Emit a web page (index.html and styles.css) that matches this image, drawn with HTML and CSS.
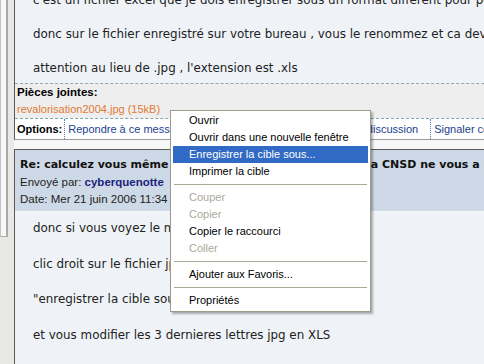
FILE: index.html
```html
<!DOCTYPE html>
<html>

<head>
    <title>Forum - revalorisation</title>
    <meta charset="utf-8">
    <link rel="stylesheet" href="styles.css">
</head>

<body>
    <div class="page">
        <div class="gutter">
            <div class="strip"></div>
        </div>

        <div class="thread">
            <!-- previous message, scrolled partly out of view -->
            <div class="post post-first">
                <div class="post-body">
                    <p>c'est un fichier excel que je dois enregistrer sous un format different pour pouvoir l'ouvrir sur mon ordinateur</p>
                    <p>donc sur le fichier enregistré sur votre bureau , vous le renommez et ca devrait marcher sans probleme</p>
                    <p>attention au lieu de .jpg , l'extension est .xls</p>
                </div>
                <div class="attach">
                    <div class="attach-title">Pièces jointes:</div>
                    <a class="attach-file" href="#">revalorisation2004.jpg (15kB)</a>
                </div>
                <div class="options">
                    <span class="options-label">Options:</span>
                    <a href="#">Repondre à ce message</a>
                    <a href="#">Citer ce message</a>
                    <a href="#">Voir toute la discussion</a>
                    <a href="#">Signaler ce message</a>
                </div>
            </div>

            <div class="post">
                <div class="post-head">
                    <div class="post-title">Re: calculez vous même votre revalorisation de 2004 si la CNSD ne vous a pas répondu</div>
                    <div class="post-meta">Envoyé par: <b>cyberquenotte</b></div>
                    <div class="post-meta">Date: Mer 21 juin 2006 11:34</div>
                </div>
                <div class="post-body">
                    <p>donc si vous voyez le message d'erreur</p>
                    <p>clic droit sur le fichier jpg</p>
                    <p>"enregistrer la cible sous"</p>
                    <p>et vous modifier les 3 dernieres lettres jpg en XLS</p>
                </div>
            </div>
        </div>
    </div>

    <!-- right-click menu over the attachment link -->
    <div class="context-menu">
        <div class="menu-item">Ouvrir</div>
        <div class="menu-item">Ouvrir dans une nouvelle fenêtre</div>
        <div class="menu-item active">Enregistrer la cible sous...</div>
        <div class="menu-item">Imprimer la cible</div>
        <div class="menu-sep"></div>
        <div class="menu-item disabled">Couper</div>
        <div class="menu-item disabled">Copier</div>
        <div class="menu-item">Copier le raccourci</div>
        <div class="menu-item disabled">Coller</div>
        <div class="menu-sep"></div>
        <div class="menu-item">Ajouter aux Favoris...</div>
        <div class="menu-sep"></div>
        <div class="menu-item">Propriétés</div>
    </div>
</body>

</html>
```

FILE: styles.css
```css
body {
    margin: 0;
    background-color: #f7f7f7;
    font-family: "Liberation Sans", Arial, sans-serif;
    overflow: hidden;
}

.page {
    display: flex;
    width: 760px;
    min-height: 364px;
}

.gutter {
    width: 14px;
    flex-shrink: 0;
    background-color: #e9e8e4;
}

.strip {
    width: 5px;
    height: 236px;
    background-color: #f8f8f8;
    border-left: 1px solid #c4c4c4;
    border-right: 2px solid #a9a9a9;
    border-bottom: 1px solid #a9a9a9;
}

.thread {
    flex: 1;
}

.post {
    background-color: #eff3f8;
    border: 1px solid #5a5a5a;
    border-right: none;
    margin-bottom: 9px;
}

.post-first {
    margin-top: -8px;
    border-top: none;
    border-bottom-color: #9a9a9a;
}

.post-body {
    padding: 0 18px 6px;
    font-family: "DejaVu Sans", Verdana, sans-serif;
    font-size: 11.9px;
    color: #222;
    white-space: nowrap;
}

.post-body p {
    margin: 0 0 17px;
    line-height: 17px;
}

.post-body p:last-child {
    margin-bottom: 0;
}

.attach {
    background-color: #eeeeee;
    border-top: 1px dashed #9aa4a8;
    padding: 0 2px 1px;
    line-height: 16px;
}

.attach-title {
    font-weight: bold;
    font-size: 11.5px;
    color: #000;
}

.attach-file {
    font-size: 11px;
    color: #e07a32;
    text-decoration: none;
}

.options {
    display: flex;
    background-color: white;
    border-top: 1px dashed #7ea6b4;
    height: 20px;
    line-height: 20px;
    font-size: 11px;
    white-space: nowrap;
}

.options-label {
    font-weight: bold;
    color: #000;
    padding: 0 2px;
}

.options a {
    color: #23418f;
    text-decoration: none;
    border-left: 1px dotted #4f7fbf;
    padding: 0 12px 0 3px;
}

.post-head {
    background-color: #cdd9e6;
    padding: 5px 5px 3px;
    white-space: nowrap;
}

.post-title {
    font-family: "DejaVu Sans", Verdana, sans-serif;
    font-weight: bold;
    font-size: 11px;
    line-height: 19px;
    color: #111;
}

.post-meta {
    font-size: 11.5px;
    line-height: 17px;
    color: #222;
}

.post-meta b {
    color: #1c237c;
}

.post-head + .post-body {
    border-top: 1px solid #f6f9fc;
    padding-top: 8px;
}

.post-head + .post-body p {
    line-height: 17.5px;
    margin-bottom: 18px;
}

.context-menu {
    position: absolute;
    left: 170px;
    top: 110px;
    width: 201px;
    box-sizing: border-box;
    background-color: white;
    border: 1px solid #9d9a8c;
    padding: 1px 2px 2px;
    box-shadow: 2px 2px 2px rgba(0, 0, 0, 0.3);
    font-size: 11px;
}

.menu-item {
    height: 17px;
    line-height: 17px;
    padding-left: 16px;
    color: #000;
    white-space: nowrap;
}

.menu-item.active {
    background-color: #316ac5;
    color: white;
}

.menu-item.disabled {
    color: #aca899;
}

.menu-sep {
    border-top: 1px solid #aca899;
    margin: 4px 1px;
}
```
